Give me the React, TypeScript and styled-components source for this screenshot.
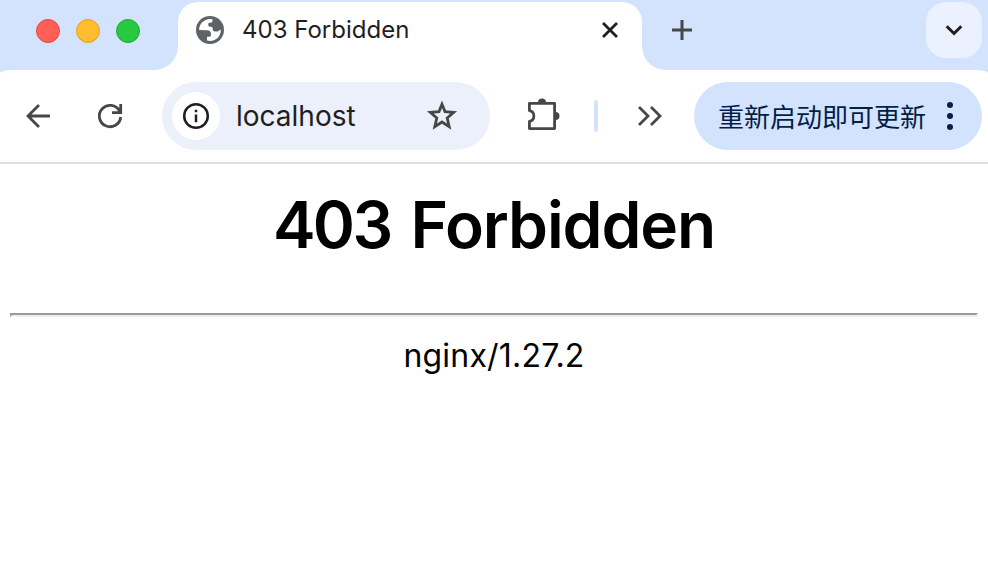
import React from "react";
import styled, { createGlobalStyle } from "styled-components";

const Global = createGlobalStyle`
  * { box-sizing: border-box; }
  body { margin: 0; background: #fff; font-family: Inter, "Noto Sans CJK SC", sans-serif; }
`;
const Window = styled.div`
  width: 988px;
  height: 562px;
  background: #fff;
  overflow: hidden;
`;
const TabStrip = styled.header`
  display: flex;
  height: 70px;
  background: #d3e3fd;
`;
const Lights = styled.div`
  display: flex;
  gap: 16px;
  padding: 19px 0 0 36px;
  width: 154px;
`;
const Light = styled.span<{ $fill: string; $edge: string }>`
  width: 24px;
  height: 24px;
  border-radius: 50%;
  background: ${(p) => p.$fill};
  border: 1px solid ${(p) => p.$edge};
`;
const Flare = styled.span<{ $side: "left" | "right" }>`
  width: 24px;
  height: 24px;
  align-self: flex-end;
  background: radial-gradient(circle at ${(p) => (p.$side === "left" ? "0 0" : "100% 0")}, #d3e3fd 23.5px, #fff 24.5px);
`;
const Tab = styled.div`
  display: flex;
  align-items: center;
  width: 464px;
  height: 68px;
  margin-top: 2px;
  padding: 0 20px 12px 18px;
  background: #fff;
  border-radius: 20px 20px 0 0;
`;
const TabTitle = styled.span`
  flex: 1;
  margin-left: 18px;
  font-size: 24px;
  line-height: 32px;
  color: #1f1f1f;
`;
const NewTab = styled.button`
  display: flex;
  padding: 0;
  border: 0;
  background: none;
  margin: 18px 0 0 4px;
  height: 24px;
`;
const TabSearch = styled.button`
  display: flex;
  align-items: center;
  justify-content: center;
  width: 56px;
  height: 56px;
  margin: 2px 6px 0 auto;
  padding: 0;
  border: 0;
  border-radius: 20px;
  background: #ebf1fe;
`;
const ToolbarBack = styled.div`
  background: #d3e3fd;
`;
const Toolbar = styled.nav`
  display: flex;
  align-items: center;
  height: 94px;
  padding: 0 6px 0 18px;
  background: #fff;
  border-radius: 12px 12px 0 0 / 3px 3px 0 0;
  border-bottom: 2px solid #e0e0e0;
`;
const ToolButton = styled.button<{ $gap?: number }>`
  display: flex;
  padding: 0;
  border: 0;
  background: none;
  margin-left: ${(p) => p.$gap ?? 0}px;
`;
const AddressBar = styled.div`
  display: flex;
  align-items: center;
  width: 328px;
  height: 68px;
  margin-left: 32px;
  padding: 0 28px 0 10px;
  border-radius: 34px;
  background: #ecf0fa;
`;
const InfoChip = styled.span`
  display: flex;
  align-items: center;
  justify-content: center;
  width: 48px;
  height: 48px;
  border-radius: 50%;
  background: #fff;
`;
const Address = styled.span`
  flex: 1;
  margin-left: 16px;
  font-size: 28px;
  line-height: 40px;
  color: #1f1f1f;
`;
const Divider = styled.span`
  width: 4px;
  height: 32px;
  margin-left: 31px;
  border-radius: 2px;
  background: #d3e3fd;
`;
const UpdatePill = styled.button`
  display: flex;
  align-items: center;
  justify-content: space-between;
  width: 288px;
  height: 68px;
  margin-left: auto;
  padding: 0 26px 0 24px;
  border: 0;
  border-radius: 34px;
  background: #d3e3fd;
  color: #041e49;
  font: 400 26px/40px "Noto Sans CJK SC", sans-serif;
  white-space: nowrap;
`;
const Page = styled.main`
  padding: 0 10px;
  text-align: center;
  color: #000;
`;
const Heading = styled.h1`
  margin: 0;
  padding-top: 21px;
  height: 149px;
  font-size: 64px;
  line-height: 80px;
  font-weight: 600;
  letter-spacing: -1.1px;
  word-spacing: 5px;
`;
const StatusCode = styled.span`
  letter-spacing: -2.7px;
`;
const Rule = styled.hr`
  height: 4px;
  margin: 0;
  border: 0;
  border-top: 2px solid #9a9a9a;
  border-left: 2px solid #9a9a9a;
  border-bottom: 2px solid #eeeeee;
  border-right: 2px solid #eeeeee;
`;
const Server = styled.p`
  margin: 19px 0 0;
  font-size: 32px;
  line-height: 40px;
  letter-spacing: 0.2px;
`;

const Globe = () => (
  <svg width="28" height="28" viewBox="0 0 28 28">
    <circle cx="14" cy="14" r="14" fill="#5f6368" />
    <path
      fill="#fff"
      d="M3.100 14C3.100 8 8 3.200 14 3.100L16.500 3.300V4.800Q16.500 6.700 14.500 6.700H13.500Q12.300 6.700 12.300 8V9.300Q12.300 10.700 13.800 10.700H15Q16.700 10.700 16.700 12.300V13.300Q16.700 15.500 19 15.500H21.500L24.800 13.500C25 20 20.500 24.900 14 24.900L11 24.500V20.700H13.200Q15 20.700 15 19V18.200Q15 14.200 11 14.200Z"
    />
  </svg>
);

const App = () => (
  <Window>
    <Global />
    <TabStrip>
      <Lights>
        <Light $fill="#ff5f57" $edge="#e24b41" />
        <Light $fill="#febc2e" $edge="#e1a325" />
        <Light $fill="#28c840" $edge="#24a932" />
      </Lights>
      <Flare $side="left" />
      <Tab>
        <Globe />
        <TabTitle>403 Forbidden</TabTitle>
        <svg width="24" height="24" viewBox="0 0 24 24" stroke="#1f1f1f" strokeWidth="2.8" strokeLinecap="butt">
          <path d="M5 5 19 19M19 5 5 19" />
        </svg>
      </Tab>
      <Flare $side="right" />
      <NewTab>
        <svg width="24" height="24" viewBox="0 0 24 24" stroke="#474747" strokeWidth="3">
          <path d="M12 2V22M2 12H22" />
        </svg>
      </NewTab>
      <TabSearch>
        <svg width="24" height="24" viewBox="0 0 24 24" fill="none" stroke="#1f1f1f" strokeWidth="3">
          <path d="M4.700 8.200 12 15.500 19.300 8.200" />
        </svg>
      </TabSearch>
    </TabStrip>
    <ToolbarBack>
      <Toolbar>
        <ToolButton>
          <svg width="40" height="40" viewBox="0 0 40 40" fill="none" stroke="#474747" strokeWidth="2.8">
            <path d="M32 20H10M21 9 10 20 21 31" />
          </svg>
        </ToolButton>
        <ToolButton $gap={32}>
          <svg width="40" height="40" viewBox="0 0 40 40" fill="none" stroke="#474747" strokeWidth="2.8">
            <path d="M30.700 21A10.700 10.700 0 1 1 29.500 15M30.700 8V16.700H22" />
          </svg>
        </ToolButton>
        <AddressBar>
          <InfoChip>
            <svg width="28" height="28" viewBox="0 0 28 28" fill="none" stroke="#1f1f1f" strokeWidth="2.500">
              <circle cx="14" cy="14" r="11.800" />
              <path d="M14 12.600V20.300M14 7.800V10.300" />
            </svg>
          </InfoChip>
          <Address>localhost</Address>
          <svg width="40" height="40" viewBox="0 0 40 40" fill="none" stroke="#474747" strokeWidth="2.800">
            <path d="M20 8.200 23 15.600 31.700 16.300 25.200 22 27.200 30.600 20 26 12.800 30.600 14.800 22 8.300 16.300 17 15.600Z" />
          </svg>
        </AddressBar>
        <ToolButton $gap={33}>
          <svg width="40" height="40" viewBox="0 0 40 40">
            <path
              fill="none"
              stroke="#474747"
              strokeWidth="2.800"
              strokeLinejoin="round"
              d="M6.400 7.400H31.600V32.600H6.400V25.400A5.500 5.500 0 0 0 6.400 14.600Z"
            />
            <path fill="#474747" d="M15 6.500A4 4 0 0 1 23 6.500ZM32.500 16A4 4 0 0 1 32.500 24Z" />
          </svg>
        </ToolButton>
        <Divider />
        <ToolButton $gap={32}>
          <svg width="40" height="40" viewBox="0 0 40 40" fill="none" stroke="#474747" strokeWidth="2.800">
            <path d="M9 11 18 20 9 29M21 11 30 20 21 29" />
          </svg>
        </ToolButton>
        <UpdatePill>
          重新启动即可更新
          <svg width="12" height="32" viewBox="0 0 12 32" fill="#041e49">
            <circle cx="6" cy="5" r="3" />
            <circle cx="6" cy="16" r="3" />
            <circle cx="6" cy="27" r="3" />
          </svg>
        </UpdatePill>
      </Toolbar>
    </ToolbarBack>
    <Page>
      <Heading>
        <StatusCode>403</StatusCode> Forbidden
      </Heading>
      <Rule />
      <Server>nginx/1.27.2</Server>
    </Page>
  </Window>
);

export default App;
